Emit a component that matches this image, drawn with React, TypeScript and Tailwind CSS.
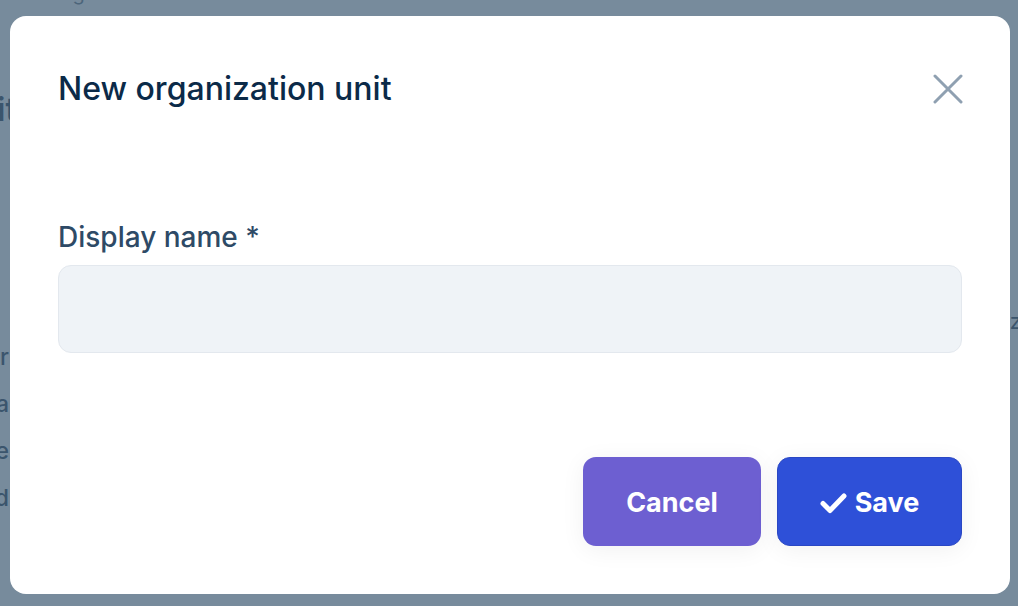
import React from "react";

export default function App() {
  return (
    <div
      className="relative w-[1018px] h-[606px] overflow-hidden bg-[#778b9c]"
      style={{ fontFamily: "Inter, 'Noto Sans', sans-serif" }}
    >
      {/* page behind the overlay */}
      <div className="flex flex-col text-[#3b556d]">
        <div className="h-[10px] overflow-hidden pl-[50px] text-[20px] leading-[10px] opacity-70">
          <span className="relative -top-[12px]">Organization units</span>
        </div>
        <div className="flex w-[10px] overflow-hidden mt-[80px] text-[32px] leading-[40px] font-semibold whitespace-nowrap">
          <span className="-ml-[3px]">it</span>
        </div>
        <div className="flex justify-end w-[1018px] h-[25px] mt-[179px] text-[22px] leading-[25px] overflow-hidden">
          <span className="translate-x-[4px]">z</span>
        </div>
        <div className="flex flex-col w-[9px] overflow-hidden text-[23px] leading-[47px] font-medium whitespace-nowrap">
          <div className="flex justify-end">Nar</div>
          <div className="flex justify-end">Lea</div>
          <div className="flex justify-end">Te</div>
          <div className="flex justify-end">Id</div>
        </div>
      </div>

      {/* modal */}
      <div className="absolute left-[10px] top-[16px] w-[1000px] h-[578px] rounded-[16px] bg-white flex flex-col px-[48px]">
        <div className="flex items-center justify-between pt-[53px]">
          <h2 className="text-[32px] leading-[40px] font-medium text-[#0b2a48]">
            New organization unit
          </h2>
          <button className="w-[30px] h-[30px] flex items-center justify-center -mr-[1px]">
            <svg width="30" height="30" viewBox="0 0 30 30" fill="none">
              <path d="M2 2 L28 28 M28 2 L2 28" stroke="#8fa0b1" strokeWidth="3" strokeLinecap="round" />
            </svg>
          </button>
        </div>

        <label className="mt-[112px] text-[28px] leading-[32px] font-medium text-[#2e4a66]">
          Display name *
        </label>
        <div className="mt-[12px] h-[88px] rounded-[13px] bg-[#eff3f7] border border-[#e3e8ee]" />

        <div className="flex justify-end gap-[16px] mt-[104px]">
          <button className="w-[178px] h-[89px] pt-[3px] rounded-[13px] bg-[#6d5fd1] text-white text-[27px] font-bold shadow-[0_4px_24px_rgba(15,23,42,0.06)]">
            Cancel
          </button>
          <button className="w-[185px] h-[89px] pt-[3px] rounded-[13px] bg-[#2e50d8] border border-[#2a47c4] text-white text-[27px] font-bold flex items-center justify-center gap-[8px] shadow-[0_4px_24px_rgba(15,23,42,0.06)]">
            <svg width="27" height="22" viewBox="0 0 27 22" fill="none">
              <path d="M3 11.5 L10 18.5 L24 4" stroke="white" strokeWidth="5" strokeLinecap="round" strokeLinejoin="round" />
            </svg>
            Save
          </button>
        </div>
      </div>
    </div>
  );
}
